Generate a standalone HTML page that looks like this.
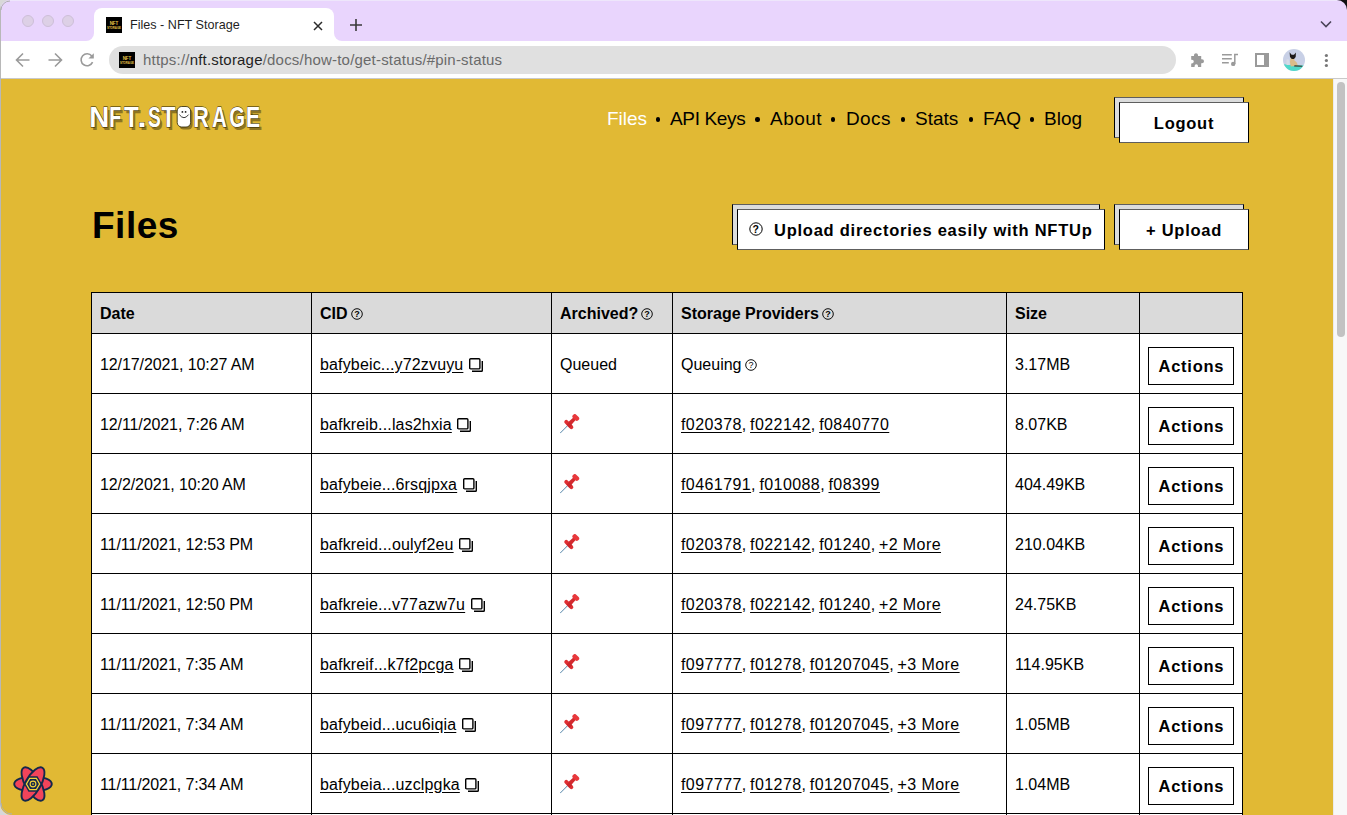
<!DOCTYPE html>
<html><head><meta charset="utf-8"><title>Files - NFT Storage</title>
<style>
*{box-sizing:border-box}
html,body{margin:0;padding:0}
body{width:1347px;height:815px;overflow:hidden;position:relative;background:#fff;font-family:"Liberation Sans",sans-serif;color:#000}
.abs{position:absolute}
#tabbar{position:absolute;left:0;top:0;width:1347px;height:41px;background:#E9D5FD}
#toolbar{position:absolute;left:0;top:41px;width:1347px;height:38px;background:#fff;border-bottom:1px solid #C9C9C9}
.light{position:absolute;top:15px;width:12px;height:12px;border-radius:50%;background:#DDD0E6;border:1px solid #CDBFD8}
#tab{position:absolute;left:94px;top:8px;width:240px;height:34px;background:#fff;border-radius:8px 8px 0 0}
.flare{position:absolute;top:33px;width:8px;height:8px;background:#fff}
.flare i{position:absolute;left:0;top:0;width:8px;height:8px;background:#E9D5FD}
#tabtitle{position:absolute;left:130px;top:17px;font-size:12.6px;line-height:16px;color:#1F1F1F;white-space:nowrap}
#omni{position:absolute;left:109px;top:46px;width:1067px;height:28px;border-radius:14px;background:#E0E0E0}
#url{position:absolute;left:143px;top:51px;font-size:15px;line-height:18px;color:#6A6A6A;white-space:nowrap;letter-spacing:0.2px}
#url b{font-weight:normal;color:#1F1F1F}
.fav{position:absolute;width:16px;height:16px;background:#000;overflow:hidden}
#page{position:absolute;left:0;top:79px;width:1333px;height:736px;background:#E1B934;overflow:hidden}
#sb{position:absolute;left:1333px;top:79px;width:14px;height:736px;background:#F8F8F8;border-left:1px solid #EBEBEB}
#sbthumb{position:absolute;left:1337px;top:82px;width:8px;height:255px;border-radius:4px;background:#C2C2C2}
.nav{position:absolute;top:106.5px;font-size:19px;line-height:24px;color:#000;white-space:nowrap}
.dot{position:absolute;top:117.2px;width:4.4px;height:4.4px;border-radius:50%;background:#000}
.btn{position:absolute;background:#fff;border:1px solid #000;font-weight:bold;font-size:16.5px;text-align:center;white-space:nowrap;letter-spacing:0.75px;border-top-color:#5E5E5E;border-bottom-color:#5E5E5E}
.btnback{position:absolute;background:#DBDCDC;border:1px solid #000;border-top-color:#5E5E5E;border-bottom-color:#5E5E5E}
table{position:absolute;left:91px;top:292px;border-collapse:collapse;table-layout:fixed;font-size:16px;background:#fff}
td,th{border:1px solid #000;padding:2px 8px 0 8px;text-align:left;white-space:nowrap;overflow:hidden}
th{background:#DADADA;height:41px;font-weight:bold}
td{height:60px}
td.dt{letter-spacing:-0.1px}
a.cid{letter-spacing:0.15px}
.sp a{letter-spacing:0.42px}
.sep{letter-spacing:-0.3px}
a{color:#000;text-decoration:underline;text-underline-offset:2px}
svg.q{vertical-align:-1px;margin-left:3px}
svg.cp{vertical-align:-2px;margin-left:5.6px}
svg.pin{vertical-align:-3px}
.act{display:inline-block;width:86px;height:38px;border:1px solid #000;background:#fff;font-weight:bold;font-size:16.5px;line-height:36px;text-align:center;letter-spacing:0.75px;text-indent:0.75px;vertical-align:middle;position:relative;top:1px}
</style></head><body>
<div id="tabbar"></div>
<div class="light" style="left:22px"></div>
<div class="light" style="left:42px"></div>
<div class="light" style="left:62px"></div>
<div class="flare" style="left:86px"><i style="border-radius:0 0 8px 0"></i></div>
<div class="flare" style="left:334px"><i style="border-radius:0 0 0 8px"></i></div>
<div id="tab"></div>
<div class="fav" style="left:106px;top:17px"><svg width="16" height="16"><use href="#favtxt"/></svg></div>
<div id="tabtitle">Files - NFT Storage</div>
<svg class="abs" style="left:312px;top:20px" width="12" height="12" viewBox="0 0 12 12"><path d="M2 2l8 8M10 2l-8 8" stroke="#2A2A2A" stroke-width="1.5"/></svg>
<svg class="abs" style="left:349px;top:18px" width="14" height="14" viewBox="0 0 14 14"><path d="M7 1v12M1 7h12" stroke="#3A3A3A" stroke-width="1.6"/></svg>
<svg class="abs" style="left:1319px;top:19px" width="14" height="10" viewBox="0 0 14 10"><path d="M2 2.5l5 5 5-5" fill="none" stroke="#4A4458" stroke-width="1.6"/></svg>
<div id="toolbar"></div>
<svg class="abs" style="left:14px;top:51px" width="18" height="18" viewBox="0 0 18 18"><path d="M2.5 9h13M9 2.5L2.5 9 9 15.5" fill="none" stroke="#9A9A9A" stroke-width="1.6"/></svg>
<svg class="abs" style="left:46px;top:51px" width="18" height="18" viewBox="0 0 18 18"><path d="M2.5 9h13M9 2.5L15.5 9 9 15.5" fill="none" stroke="#9A9A9A" stroke-width="1.6"/></svg>
<svg class="abs" style="left:78px;top:51px" width="18" height="18" viewBox="0 0 18 18"><path d="M14.6 11.2A6 6 0 1 1 13.8 5" fill="none" stroke="#9A9A9A" stroke-width="1.6"/><path d="M15.8 2.2v5.4h-5.4z" fill="#9A9A9A"/></svg>
<div id="omni"></div>
<div class="fav" style="left:119px;top:52px"><svg width="16" height="16"><use href="#favtxt"/></svg></div>
<div id="url">https://<b>nft.storage</b>/docs/how-to/get-status/#pin-status</div>
<svg class="abs" style="left:1190px;top:52px" width="16" height="16" viewBox="0 0 16 16"><path d="M6 1.2c1.1 0 2 .9 2 2V4h3.2v3.2H12a2 2 0 1 1 0 4h-.8V15H8v-1a1.7 1.7 0 1 0-3.4 0v1H1.2v-3.6H2a1.8 1.8 0 1 0 0-3.6h-.8V4H4v-.8c0-1.1.9-2 2-2z" fill="#9A9A9A"/></svg>
<svg class="abs" style="left:1220px;top:52px" width="20" height="16" viewBox="0 0 20 16"><path d="M2 2.7h9.8M2 6.7h9.8M2 10.7h6.8" stroke="#9A9A9A" stroke-width="1.5"/><path d="M14.8 12V2.5h3.2" fill="none" stroke="#9A9A9A" stroke-width="1.5"/><circle cx="13.2" cy="11.9" r="2.2" fill="#9A9A9A"/></svg>
<svg class="abs" style="left:1254px;top:52px" width="16" height="16" viewBox="0 0 16 16"><rect x="2" y="2" width="12" height="12" fill="none" stroke="#9A9A9A" stroke-width="2"/><rect x="10" y="1" width="5" height="14" fill="#9A9A9A"/></svg>
<svg class="abs" style="left:1283px;top:49px" width="22" height="22" viewBox="0 0 22 22"><defs><clipPath id="av"><circle cx="11" cy="11" r="11"/></clipPath></defs><g clip-path="url(#av)"><rect width="22" height="22" fill="#C8D0E6"/><path d="M0 15.2l22 1.2V22H0z" fill="#4FD8C9"/><path d="M3.5 10.5l2-.5 1.5 6H3.5z" fill="#D6DAE6"/><path d="M7.6 8.6h3.4l.6 3.2c1.8.9 2.9 2.4 3.1 4.8l-6.9.9-.9-4.2z" fill="#D9BC8A"/><path d="M11.5 16.2l7.8.6v1l-8.2-.2z" fill="#3A3028"/><path d="M6.6 3.2l2 2.6h2.4l1.9-2.4-.2 4.6-1.7 2h-2.2l-1.8-2.1z" fill="#1C1A18"/></g></svg>
<svg class="abs" style="left:1322px;top:52px" width="8" height="16" viewBox="0 0 8 16"><circle cx="4.4" cy="3.5" r="1.6" fill="#777"/><circle cx="4.4" cy="8.5" r="1.6" fill="#777"/><circle cx="4.4" cy="13.5" r="1.6" fill="#777"/></svg>
<div id="page"></div>
<svg class="abs" style="left:0;top:0;overflow:visible" width="300" height="140"><g font-family="Liberation Sans" font-weight="bold" font-size="29.8"><text transform="translate(93.00,129.50) scale(0.930,1)" x="-1.99" fill="#8E7420">N</text><text transform="translate(112.60,129.50) scale(0.661,1)" x="-1.99" fill="#8E7420">F</text><text transform="translate(126.30,129.50) scale(0.809,1)" x="-0.33" fill="#8E7420">T</text><text transform="translate(141.60,129.50) scale(1.142,1)" x="-2.02" fill="#8E7420">.</text><text transform="translate(150.50,129.50) scale(0.644,1)" x="-0.86" fill="#8E7420">S</text><text transform="translate(163.80,129.50) scale(0.764,1)" x="-0.33" fill="#8E7420">T</text><text transform="translate(196.70,129.50) scale(0.724,1)" x="-1.99" fill="#8E7420">R</text><text transform="translate(214.50,129.50) scale(0.685,1)" x="-0.74" fill="#8E7420">A</text><text transform="translate(232.00,129.50) scale(0.681,1)" x="-1.22" fill="#8E7420">G</text><text transform="translate(249.40,129.50) scale(0.712,1)" x="-1.99" fill="#8E7420">E</text><rect x="179.2" y="109.0" width="13.4" height="20.5" rx="4.5" fill="#8E7420"/><text transform="translate(91.00,127.00) scale(0.930,1)" x="-1.99" fill="#fff" stroke="#2a2200" stroke-width="0.8" paint-order="stroke">N</text><text transform="translate(110.60,127.00) scale(0.661,1)" x="-1.99" fill="#fff" stroke="#2a2200" stroke-width="0.8" paint-order="stroke">F</text><text transform="translate(124.30,127.00) scale(0.809,1)" x="-0.33" fill="#fff" stroke="#2a2200" stroke-width="0.8" paint-order="stroke">T</text><text transform="translate(139.60,127.00) scale(1.142,1)" x="-2.02" fill="#fff" stroke="#2a2200" stroke-width="0.8" paint-order="stroke">.</text><text transform="translate(148.50,127.00) scale(0.644,1)" x="-0.86" fill="#fff" stroke="#2a2200" stroke-width="0.8" paint-order="stroke">S</text><text transform="translate(161.80,127.00) scale(0.764,1)" x="-0.33" fill="#fff" stroke="#2a2200" stroke-width="0.8" paint-order="stroke">T</text><text transform="translate(194.70,127.00) scale(0.724,1)" x="-1.99" fill="#fff" stroke="#2a2200" stroke-width="0.8" paint-order="stroke">R</text><text transform="translate(212.50,127.00) scale(0.685,1)" x="-0.74" fill="#fff" stroke="#2a2200" stroke-width="0.8" paint-order="stroke">A</text><text transform="translate(230.00,127.00) scale(0.681,1)" x="-1.22" fill="#fff" stroke="#2a2200" stroke-width="0.8" paint-order="stroke">G</text><text transform="translate(247.40,127.00) scale(0.712,1)" x="-1.99" fill="#fff" stroke="#2a2200" stroke-width="0.8" paint-order="stroke">E</text><rect x="177.2" y="106.5" width="13.4" height="20.5" rx="4.5" fill="#fff" stroke="#2a2200" stroke-width="0.8"/><circle cx="182.4" cy="111.9" r="0.9" fill="#222"/><circle cx="185.6" cy="111.9" r="0.9" fill="#222"/><path d="M179.3 114.6Q184 120.8 188.6 114.6" fill="none" stroke="#222" stroke-width="0.9"/></g></svg>
<div class="nav" style="left:607px;color:#fff">Files</div>
<div class="dot" style="left:655.5px"></div>
<div class="nav" style="left:670px;letter-spacing:-0.35px">API Keys</div>
<div class="dot" style="left:755.2px"></div>
<div class="nav" style="left:770px;letter-spacing:0.5px">About</div>
<div class="dot" style="left:831px"></div>
<div class="nav" style="left:846px;letter-spacing:0.4px">Docs</div>
<div class="dot" style="left:900.6px"></div>
<div class="nav" style="left:915px">Stats</div>
<div class="dot" style="left:969px"></div>
<div class="nav" style="left:983px">FAQ</div>
<div class="dot" style="left:1029.6px"></div>
<div class="nav" style="left:1044px">Blog</div>
<div class="btnback" style="left:1114px;top:97px;width:130px;height:41px"></div>
<div class="btn" style="left:1119px;top:102px;width:130px;height:41px;line-height:41px">Logout</div>
<div class="abs" style="left:92px;top:201.7px;font-size:37px;font-weight:bold;line-height:48px;letter-spacing:0.5px">Files</div>
<div class="btnback" style="left:732px;top:204px;width:368px;height:41px"></div>
<div class="btn" style="left:737px;top:209px;width:368px;height:41px;line-height:41px"><svg width="14" height="14" viewBox="0 0 14 14" style="vertical-align:0px;margin-right:10.5px"><use href="#qm2"/></svg>Upload directories easily with NFTUp</div>
<div class="btnback" style="left:1114px;top:204px;width:130px;height:41px"></div>
<div class="btn" style="left:1119px;top:209px;width:130px;height:41px;line-height:41px">+ Upload</div>
<table>
<colgroup><col style="width:220px"><col style="width:240px"><col style="width:121px"><col style="width:334px"><col style="width:133px"><col style="width:103px"></colgroup>
<tr><th>Date</th><th>CID<svg class="q" width="12" height="12" viewBox="0 0 12 12"><use href="#qm"/></svg></th><th>Archived?<svg class="q" width="12" height="12" viewBox="0 0 12 12"><use href="#qm"/></svg></th><th>Storage Providers<svg class="q" width="12" height="12" viewBox="0 0 12 12"><use href="#qm"/></svg></th><th>Size</th><th></th></tr>
<tr><td class="dt">12/17/2021, 10:27 AM</td><td><a class="cid">bafybeic...y72zvuyu</a><svg class="cp" width="14" height="14" viewBox="0 0 14 14"><use href="#copy"/></svg></td><td>Queued</td><td class="sp">Queuing<svg class="q" width="12" height="12" viewBox="0 0 12 12"><use href="#qm"/></svg></td><td>3.17MB</td><td><span class="act">Actions</span></td></tr>
<tr><td class="dt">12/11/2021, 7:26 AM</td><td><a class="cid">bafkreib...las2hxia</a><svg class="cp" width="14" height="14" viewBox="0 0 14 14"><use href="#copy"/></svg></td><td><svg class="pin" width="20" height="20" viewBox="0 0 20 20"><use href="#pin"/></svg></td><td class="sp"><a>f020378</a><span class="sep">, </span><a>f022142</a><span class="sep">, </span><a>f0840770</a></td><td>8.07KB</td><td><span class="act">Actions</span></td></tr>
<tr><td class="dt">12/2/2021, 10:20 AM</td><td><a class="cid">bafybeie...6rsqjpxa</a><svg class="cp" width="14" height="14" viewBox="0 0 14 14"><use href="#copy"/></svg></td><td><svg class="pin" width="20" height="20" viewBox="0 0 20 20"><use href="#pin"/></svg></td><td class="sp"><a>f0461791</a><span class="sep">, </span><a>f010088</a><span class="sep">, </span><a>f08399</a></td><td>404.49KB</td><td><span class="act">Actions</span></td></tr>
<tr><td class="dt">11/11/2021, 12:53 PM</td><td><a class="cid">bafkreid...oulyf2eu</a><svg class="cp" width="14" height="14" viewBox="0 0 14 14"><use href="#copy"/></svg></td><td><svg class="pin" width="20" height="20" viewBox="0 0 20 20"><use href="#pin"/></svg></td><td class="sp"><a>f020378</a><span class="sep">, </span><a>f022142</a><span class="sep">, </span><a>f01240</a><span class="sep">, </span><a>+2 More</a></td><td>210.04KB</td><td><span class="act">Actions</span></td></tr>
<tr><td class="dt">11/11/2021, 12:50 PM</td><td><a class="cid">bafkreie...v77azw7u</a><svg class="cp" width="14" height="14" viewBox="0 0 14 14"><use href="#copy"/></svg></td><td><svg class="pin" width="20" height="20" viewBox="0 0 20 20"><use href="#pin"/></svg></td><td class="sp"><a>f020378</a><span class="sep">, </span><a>f022142</a><span class="sep">, </span><a>f01240</a><span class="sep">, </span><a>+2 More</a></td><td>24.75KB</td><td><span class="act">Actions</span></td></tr>
<tr><td class="dt">11/11/2021, 7:35 AM</td><td><a class="cid">bafkreif...k7f2pcga</a><svg class="cp" width="14" height="14" viewBox="0 0 14 14"><use href="#copy"/></svg></td><td><svg class="pin" width="20" height="20" viewBox="0 0 20 20"><use href="#pin"/></svg></td><td class="sp"><a>f097777</a><span class="sep">, </span><a>f01278</a><span class="sep">, </span><a>f01207045</a><span class="sep">, </span><a>+3 More</a></td><td>114.95KB</td><td><span class="act">Actions</span></td></tr>
<tr><td class="dt">11/11/2021, 7:34 AM</td><td><a class="cid">bafybeid...ucu6iqia</a><svg class="cp" width="14" height="14" viewBox="0 0 14 14"><use href="#copy"/></svg></td><td><svg class="pin" width="20" height="20" viewBox="0 0 20 20"><use href="#pin"/></svg></td><td class="sp"><a>f097777</a><span class="sep">, </span><a>f01278</a><span class="sep">, </span><a>f01207045</a><span class="sep">, </span><a>+3 More</a></td><td>1.05MB</td><td><span class="act">Actions</span></td></tr>
<tr><td class="dt">11/11/2021, 7:34 AM</td><td><a class="cid">bafybeia...uzclpgka</a><svg class="cp" width="14" height="14" viewBox="0 0 14 14"><use href="#copy"/></svg></td><td><svg class="pin" width="20" height="20" viewBox="0 0 20 20"><use href="#pin"/></svg></td><td class="sp"><a>f097777</a><span class="sep">, </span><a>f01278</a><span class="sep">, </span><a>f01207045</a><span class="sep">, </span><a>+3 More</a></td><td>1.04MB</td><td><span class="act">Actions</span></td></tr>
<tr><td class="dt">11/11/2021, 7:33 AM</td><td><a class="cid">bafybeib...x4kq2mza</a><svg class="cp" width="14" height="14" viewBox="0 0 14 14"><use href="#copy"/></svg></td><td><svg class="pin" width="20" height="20" viewBox="0 0 20 20"><use href="#pin"/></svg></td><td class="sp"><a>f097777</a><span class="sep">, </span><a>f01278</a><span class="sep">, </span><a>f01207045</a><span class="sep">, </span><a>+3 More</a></td><td>1.02MB</td><td><span class="act">Actions</span></td></tr>
</table>
<div id="sb"></div><div id="sbthumb"></div>
<svg class="abs" style="left:8px;top:759px" width="50" height="50" viewBox="0 0 50 50"><g transform="translate(25,25)" stroke="#14284B" stroke-width="1.9" fill="#F2445A"><ellipse rx="18.8" ry="7.6"/><ellipse rx="18.8" ry="7.6" transform="rotate(60)"/><ellipse rx="18.8" ry="7.6" transform="rotate(120)"/></g><g transform="translate(25,25)"><g transform="rotate(30)"><path d="M0-9L7.8-4.5V4.5L0 9-7.8 4.5V-4.5z" fill="#14284B"/><path d="M0-6.6L5.7-3.3V3.3L0 6.6-5.7 3.3V-3.3z" fill="none" stroke="#F5D33A" stroke-width="1.3"/></g><circle r="2.9" fill="none" stroke="#F5D33A" stroke-width="1.1"/><circle r="1" fill="#A89A40"/></g></svg>
<div class="abs" style="left:0;top:0;width:1px;height:815px;background:#B8B8B8"></div>
<div class="abs" style="left:10px;top:0;width:1327px;height:1px;background:#EEE6FB"></div><svg class="abs" style="left:0;top:0" width="10" height="10"><path d="M0 0H10A10 10 0 0 0 0 10z" fill="#D8D8D8"/><path d="M1 10A9 9 0 0 1 10 1" fill="none" stroke="#B0B0B0" stroke-width="1"/></svg>
<svg class="abs" style="left:0;top:803px" width="12" height="12"><path d="M0 0V12H12A12 12 0 0 1 0 0z" fill="#D8D8D8"/><path d="M1 0A11 11 0 0 0 12 11" fill="none" stroke="#B0B0B0" stroke-width="1"/></svg>
<svg class="abs" style="left:1337px;top:0" width="10" height="10"><path d="M0 0H10V10A10 10 0 0 0 0 0z" fill="#111"/></svg>

<svg width="0" height="0" style="position:absolute">
 <defs>
  <g id="qm"><circle cx="6" cy="6" r="5.3" fill="none" stroke="#000" stroke-width="0.95"/><text x="6.1" y="9.2" font-family="Liberation Sans" font-size="9" text-anchor="middle">?</text></g>
  <g id="qm2"><circle cx="7" cy="7" r="6.2" fill="none" stroke="#000" stroke-width="1"/><text x="7.1" y="10.6" font-family="Liberation Sans" font-size="10.5" text-anchor="middle">?</text></g>
  <g id="copy"><rect x="0.7" y="0.7" width="10.2" height="10.2" rx="1" fill="none" stroke="#000" stroke-width="1.4"/><path d="M3 13.3h9.5a.8.8 0 0 0 .8-.8V2.9" fill="none" stroke="#000" stroke-width="1.4"/></g>
  <g id="pin"><g transform="translate(8.8,10.5) rotate(-45)"><line x1="-1.5" y1="0" x2="-12.3" y2="0" stroke="#4a7fa5" stroke-width="0.9"/><path d="M1 -2.1L8.6 -1.7V1.7L1 2.1z" fill="#D42A2E"/><rect x="-2" y="-5.6" width="4" height="11.2" rx="2" fill="#DF2F33"/><rect x="7.6" y="-3.7" width="4.6" height="7.4" rx="2" fill="#E8383C"/><path d="M-2 -1.5h4v4.5h-4z" fill="#B52024" opacity="0.5"/></g></g>
  <g id="favtxt"><text x="8" y="7.5" font-family="Liberation Sans" font-size="4.5" font-weight="bold" fill="#E8C44A" text-anchor="middle">NFT</text><text x="8" y="11.5" font-family="Liberation Sans" font-size="4.2" font-weight="bold" fill="#E8C44A" text-anchor="middle" textLength="14" lengthAdjust="spacingAndGlyphs">STORAGE</text></g>
 </defs>
</svg>
</body></html>
